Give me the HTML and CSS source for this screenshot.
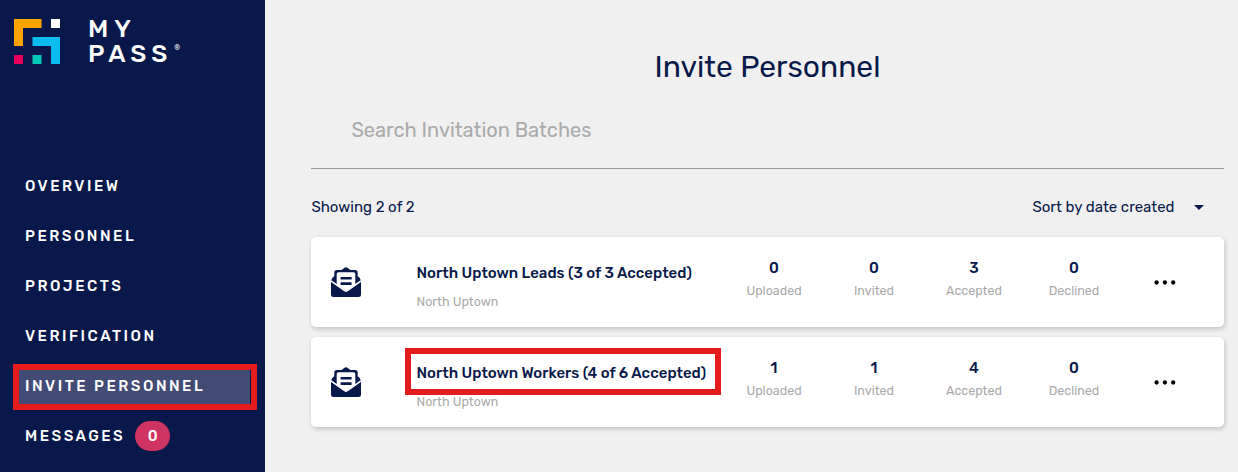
FILE: index.html
```
<!DOCTYPE html>
<html lang="en">
<head>
<meta charset="utf-8">
<title>Invite Personnel</title>
<link rel="stylesheet" href="styles.css">
</head>
<body>
<svg class="defs" aria-hidden="true">
  <symbol id="envelope" viewBox="0 0 30 30">
    <path d="M0 14.2 1.2 11 3.3 9.2 3.3 5.6Q3.3 3 6 3H10.5L14 .5Q15 0 16 .5L19.500 3H24Q26.700 3 26.700 5.600V9.200L28.800 11 30 14.200 27.500 15.800 15 24 2.500 15.800Z"/>
    <path class="paper" d="M5.700 7Q5.700 5.200 7.500 5.200H22.500Q24.300 5.200 24.300 7V17.600L15 24.200 5.700 17.600Z"/>
    <path d="M9.600 9.900H20.600V12.500H9.600ZM9.600 15.300H20.600V17.900H9.600Z"/>
    <path d="M0 14.800 13.300 24.100Q15 25.200 16.700 24.100L30 14.800V27.500Q30 30 27.500 30H2.500Q0 30 0 27.500Z"/>
    <path class="fold" d="M0 13.900 13.400 23.300Q15 24.300 16.600 23.300L30 13.900"/>
  </symbol>
  <symbol id="more" viewBox="0 0 22 6">
    <circle cx="2.600" cy="2.500" r="2.150"/><circle cx="10.900" cy="2.500" r="2.150"/><circle cx="19.200" cy="2.500" r="2.150"/>
  </symbol>
</svg>
<div class="app">
  <aside class="sidebar">
    <div class="brand">
      <svg class="brand-mark" width="47" height="46" viewBox="0 0 47 46">
        <path fill="#ffa300" d="M0 0H27.500V9H9V27H0Z"/>
        <path fill="#fff" d="M37 0H46V9H37Z"/>
        <path fill="#0abbef" d="M18.500 18H46V45H37V27H18.500Z"/>
        <path fill="#e6005c" d="M0 36H9V45H0Z"/>
        <path fill="#00c8b4" d="M18.500 36H27.500V45H18.500Z"/>
      </svg>
      <div class="brand-name"><div class="my">MY</div><div class="pass">PASS<i class="reg">®</i></div></div>
    </div>
    <nav class="nav">
      <a class="nav-item">OVERVIEW</a>
      <a class="nav-item">PERSONNEL</a>
      <a class="nav-item">PROJECTS</a>
      <a class="nav-item">VERIFICATION</a>
      <a class="nav-item active">INVITE PERSONNEL</a>
      <a class="nav-item">MESSAGES<span class="badge">0</span></a>
    </nav>
  </aside>
  <main class="main">
    <h1 class="title">Invite Personnel</h1>
    <div class="search">Search Invitation Batches</div>
    <div class="toolbar"><span>Showing 2 of 2</span><span class="sort">Sort by date created<i class="caret"></i></span></div>
    <section class="card">
      <svg class="mail"><use href="#envelope"/></svg>
      <div class="info"><div class="name">North Uptown Leads (3 of 3 Accepted)</div><div class="project">North Uptown</div></div>
      <div class="stat"><b>0</b><span>Uploaded</span></div>
      <div class="stat"><b>0</b><span>Invited</span></div>
      <div class="stat"><b>3</b><span>Accepted</span></div>
      <div class="stat"><b>0</b><span>Declined</span></div>
      <svg class="more"><use href="#more"/></svg>
    </section>
    <section class="card">
      <svg class="mail"><use href="#envelope"/></svg>
      <div class="info"><div class="name marked">North Uptown Workers (4 of 6 Accepted)</div><div class="project">North Uptown</div></div>
      <div class="stat"><b>1</b><span>Uploaded</span></div>
      <div class="stat"><b>1</b><span>Invited</span></div>
      <div class="stat"><b>4</b><span>Accepted</span></div>
      <div class="stat"><b>0</b><span>Declined</span></div>
      <svg class="more"><use href="#more"/></svg>
    </section>
  </main>
</div>
</body>
</html>
```
FILE: styles.css
```
* { box-sizing: border-box; }
body { margin: 0; font-family: Rubik, Roboto, sans-serif; font-size: 15px; color: #08184a; background: #f0f0f0; }
.defs { position: absolute; width: 0; height: 0; }
.app { display: flex; height: 472px; overflow: hidden; }

.sidebar { flex: none; width: 265px; background: #08184a; color: #fff; }
.brand { display: flex; height: 161px; padding: 18.500px 0 0 14px; }
.brand-mark { flex: none; }
.brand-name { margin: -3px 0 0 27px; font-size: 25px; font-weight: 500; line-height: 25.500px; letter-spacing: 4.900px; }
.my { letter-spacing: 6px; }
.pass { display: flex; }
.reg { margin: 3px 0 0 2px; font-size: 7px; font-style: normal; font-weight: 400; line-height: 8px; letter-spacing: 0; }
.nav { display: flex; flex-direction: column; }
.nav-item { position: relative; display: flex; align-items: center; height: 50px; padding-left: 25px; font-weight: 500; letter-spacing: 2.500px; }
.nav-item.active { height: 34px; margin: 9px 15px 7px 19px; padding: 0 0 3px 6px; background: #414b73; }
.active::after { content: ""; position: absolute; inset: -6px -7px -6px -6px; border: 6px solid #e61c1c; }
.badge { display: flex; align-items: center; justify-content: center; width: 35px; height: 30px; margin-left: 10px; border-radius: 15px; background: #cf3361; letter-spacing: 0; }

.main { flex: 1; padding: 0 14px 0 46px; }
.title { margin: 49px 0 0; font-size: 30px; line-height: 36px; font-weight: 400; text-align: center; }
.search { height: 84px; padding: 33px 0 0 40.400px; border-bottom: 1px solid #999; font-size: 20px; line-height: 24px; color: #aaa; }
.toolbar { display: flex; justify-content: space-between; height: 68px; padding: 28px 0 0 .4px; line-height: 20px; }
.sort { display: flex; align-items: center; height: 20px; }
.caret { width: 10px; margin: 0 20.500px 0 19px; border: solid transparent; border-width: 5px 5px 0; border-top-color: #08184a; }
.card { display: flex; height: 90px; margin-bottom: 10px; border-radius: 5px; background: #fff; box-shadow: 1px 2px 5px rgba(0, 0, 0, .2); }
.mail { width: 30px; height: 30px; margin: 30px 0 0 20px; fill: #08184a; }
.mail + .info { width: 307.500px; margin-left: 55.500px; padding-top: 26px; }
.paper { fill: #fff; }
.fold { fill: none; stroke: #fff; stroke-width: 1.500px; }
.name { position: relative; width: max-content; line-height: 20px; font-weight: 500; }
.marked::after { content: ""; position: absolute; inset: -15.500px -15px -11.500px -11.500px; border: 6px solid #e61c1c; }
.project { margin-top: 10px; font-size: 12.500px; line-height: 18px; color: #aaa; }
.stat { display: flex; flex-direction: column; width: 100px; padding-top: 21px; text-align: center; }
.stat b { font-weight: 500; line-height: 20px; }
.stat span { margin-top: 4px; font-size: 12.500px; line-height: 18px; color: #aaa; }
.more { width: 22px; height: 6px; margin: 43px 0 0 30px; fill: #000; }
```
